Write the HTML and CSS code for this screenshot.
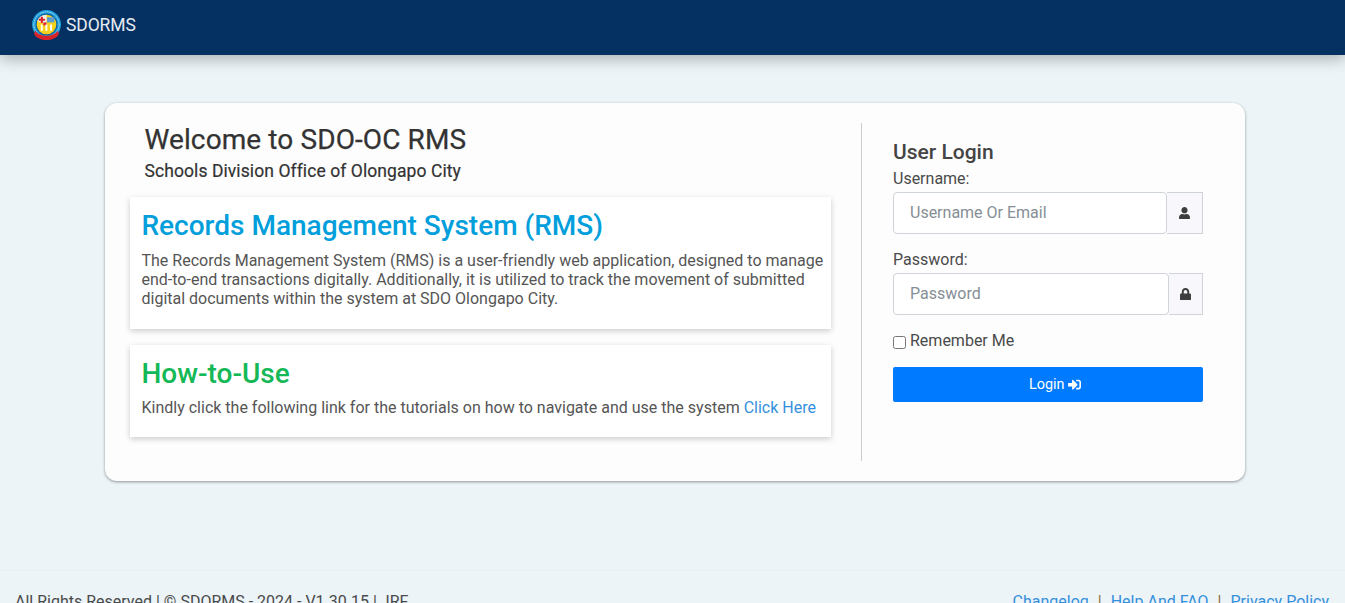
FILE: index.html
```
<!DOCTYPE html>
<html lang="en">
<head>
<meta charset="utf-8">
<title>SDORMS</title>
<link rel="stylesheet" href="styles.css">
</head>
<body>
<header class="topbar">
  <svg class="logo" viewBox="0 0 30 30" aria-hidden="true">
    <circle cx="15" cy="14" r="14" fill="#1c9fdc"/>
    <circle cx="15" cy="14" r="12.200" fill="none" stroke="#cfe9f6" stroke-width=".8" stroke-dasharray="1.500 .8"/>
    <circle cx="15" cy="14" r="10.500" fill="#0d5f9e"/>
    <circle cx="15" cy="14" r="9.500" fill="#f6d21f"/>
    <path d="M15 4.500a9.500 9.500 0 0 0-9 6.500l9 3z" fill="#f2f0ea"/>
    <rect x="15.500" y="7" width="7" height="5" fill="#5b9bd5"/>
    <path d="M9.500 6.500h2v2h2v2h-2v2h-2v-2h-2v-2h2z" fill="#d8232a"/>
    <path d="M12 12h3v3h-3z" fill="#d8232a"/>
    <path d="M9.500 14h1.800v6H9.500zM14 14h1.800v6H14zM18.500 14h1.800v6h-1.800z" fill="#fff"/>
    <path d="M4 20c5 6.500 17 6.500 22 0l1 3.500c-4 7.500-20 7.500-24 0z" fill="#d8232a"/>
  </svg>
  <span class="brand">SDORMS</span>
</header>

<main class="stage">
  <section class="panel">
    <div class="intro">
      <div class="welcome">
        <h1>Welcome to SDO-OC RMS</h1>
        <h2>Schools Division Office of Olongapo City</h2>
      </div>
      <article class="info info-first">
        <h3 class="title-blue">Records Management System (RMS)</h3>
        <p>The Records Management System (RMS) is a user-friendly web application, designed to manage end-to-end transactions digitally. Additionally, it is utilized to track the movement of submitted digital documents within the system at SDO Olongapo City.</p>
      </article>
      <article class="info info-second">
        <h3 class="title-green">How-to-Use</h3>
        <p>Kindly click the following link for the tutorials on how to navigate and use the system <a href="#">Click Here</a></p>
      </article>
    </div>
    <form class="login">
      <h4>User Login</h4>
      <label class="field-label" for="user">Username:</label>
      <div class="group">
        <input id="user" type="text" placeholder="Username Or Email">
        <span class="addon addon-user">
          <svg class="icon" viewBox="0 0 448 512" aria-hidden="true"><path d="M224 256c70.700 0 128-57.300 128-128S294.700 0 224 0 96 57.300 96 128s57.300 128 128 128zm89.600 32h-16.700c-22.200 10.200-46.900 16-72.900 16s-50.600-5.800-72.900-16h-16.700C60.200 288 0 348.200 0 422.400V464c0 26.500 21.500 48 48 48h352c26.500 0 48-21.500 48-48v-41.600c0-74.200-60.200-134.400-134.400-134.400z"/></svg>
        </span>
      </div>
      <label class="field-label" for="pass">Password:</label>
      <div class="group">
        <input id="pass" type="password" placeholder="Password">
        <span class="addon addon-lock">
          <svg class="icon" viewBox="0 0 448 512" aria-hidden="true"><path d="M400 224h-24v-72C376 68.200 307.800 0 224 0S72 68.200 72 152v72H48c-26.500 0-48 21.500-48 48v192c0 26.500 21.500 48 48 48h352c26.500 0 48-21.500 48-48V272c0-26.500-21.500-48-48-48zm-104 0H152v-72c0-39.700 32.300-72 72-72s72 32.300 72 72v72z"/></svg>
        </span>
      </div>
      <label class="remember"><input type="checkbox"> Remember Me</label>
      <button class="submit" type="button">Login
        <svg class="icon-login" viewBox="0 0 512 512" aria-hidden="true"><path d="M416 448h-84c-6.600 0-12-5.400-12-12v-40c0-6.600 5.400-12 12-12h84c17.700 0 32-14.300 32-32V160c0-17.700-14.300-32-32-32h-84c-6.600 0-12-5.400-12-12V76c0-6.600 5.400-12 12-12h84c53 0 96 43 96 96v192c0 53-43 96-96 96zm-47-201L201 79c-15-15-41-4.500-41 17v96H24c-13.300 0-24 10.700-24 24v96c0 13.300 10.700 24 24 24h136v96c0 21.500 26 32 41 17l168-168c9.300-9.400 9.300-24.600 0-34z"/></svg>
      </button>
    </form>
  </section>
</main>

<footer class="foot">
  <span>All Rights Reserved | © SDORMS - 2024 - V1.30.15 | JRF</span>
  <nav class="foot-links">
    <a href="#">Changelog</a><span class="sep">|</span><a href="#">Help And FAQ</a><span class="sep">|</span><a href="#">Privacy Policy</a>
  </nav>
</footer>
</body>
</html>
```
FILE: styles.css
```
* { box-sizing: border-box; }
html, body { height: 603px; overflow: hidden; }
body {
  margin: 0;
  background: #ecf4f8;
  color: #4a4a4a;
  font-family: Roboto, "Liberation Sans", sans-serif;
  font-size: 16px;
  line-height: 19px;
}
.topbar {
  height: 55px;
  background: #053162;
  box-shadow: 0 4px 14px rgba(0, 0, 0, .28);
  display: flex;
  align-items: center;
  padding: 0 0 5px 31px;
  gap: 4px;
}
.logo { width: 31px; height: 31px; }
.brand { color: #e6ecf2; font-size: 17.500px; letter-spacing: -.1px; }
.stage { height: 515px; padding: 48px 100px 0 105px; }
.panel {
  height: 378px;
  background: #fdfdfd;
  border-radius: 12px;
  box-shadow: 0 1px 3px rgba(0, 0, 0, .4);
  display: flex;
  padding: 20px 42px 20px 25px;
}
.intro { width: 732px; border-right: 1px solid #c9ccd0; padding-right: 30px; }
.welcome { padding-left: 14.500px; }
h1 { margin: 0; font-size: 28px; line-height: 33px; font-weight: 400; letter-spacing: .1px; -webkit-text-stroke: .25px #333; color: #333; }
h2 { margin: 5px 0 0; font-size: 17.500px; line-height: 21px; font-weight: 400; letter-spacing: .08px; -webkit-text-stroke: .2px #333; color: #333; }
.info { background: #fff; box-shadow: 0 2px 6px rgba(0, 0, 0, .2); padding: 12px 4px 12px 11.500px; }
.info-first { margin-top: 15px; height: 132px; }
.info-second { margin-top: 16px; height: 92px; }
h3 { margin: 0 0 9px; font-size: 28px; line-height: 33px; font-weight: 500; }
.title-blue { color: #029fdc; }
.title-green { color: #14b856; }
.info p { margin: 0; color: #555; }
a { color: #3490dc; text-decoration: none; }
.info-second h3 { margin-bottom: 8px; }
.login { margin-left: 31px; width: 310px; padding-top: 18px; }
h4 { margin: 0; font-size: 21px; line-height: 22px; font-weight: 500; color: #444; }
.field-label { display: block; margin-top: 6px; line-height: 19px; }
.group { display: flex; height: 42px; margin: 4px 0 16px; }
.group input {
  flex: 1;
  min-width: 0;
  border: 1px solid #ced4da;
  border-radius: 4px;
  padding: 0 16px 2px;
  font: inherit;
  color: #444;
  background: #fff;
}
.group + .field-label { margin-top: 0; }
.group input::placeholder { color: #868e96; opacity: 1; }
.addon {
  display: flex;
  align-items: center;
  justify-content: center;
  background: #f8f7fc;
  border: 1px solid #ced4da;
  border-left: 0;
}
.addon-user { width: 36px; }
.addon-lock { width: 34px; }
.icon { width: 11px; height: 12.500px; fill: #3d3d3d; }
.remember { display: flex; align-items: center; gap: 4px; margin-top: 1px; }
.remember input { margin: 3px 0 0; width: 13px; height: 13px; }
.submit {
  display: block;
  width: 100%;
  height: 35px;
  margin-top: 17px;
  padding-left: 20px;
  border: 0;
  border-radius: 2px;
  background: #007bff;
  color: #fff;
  font: 14.400px Roboto, sans-serif;
}
.icon-login { width: 13px; height: 13px; fill: #fff; vertical-align: -2px; }
.foot {
  height: 33px;
  border-top: 1px solid #e8eef1;
  display: flex;
  justify-content: space-between;
  padding: 21px 16px 0 15px;
}
.sep { margin: 0 9px; color: #8a6d3b; }
```
